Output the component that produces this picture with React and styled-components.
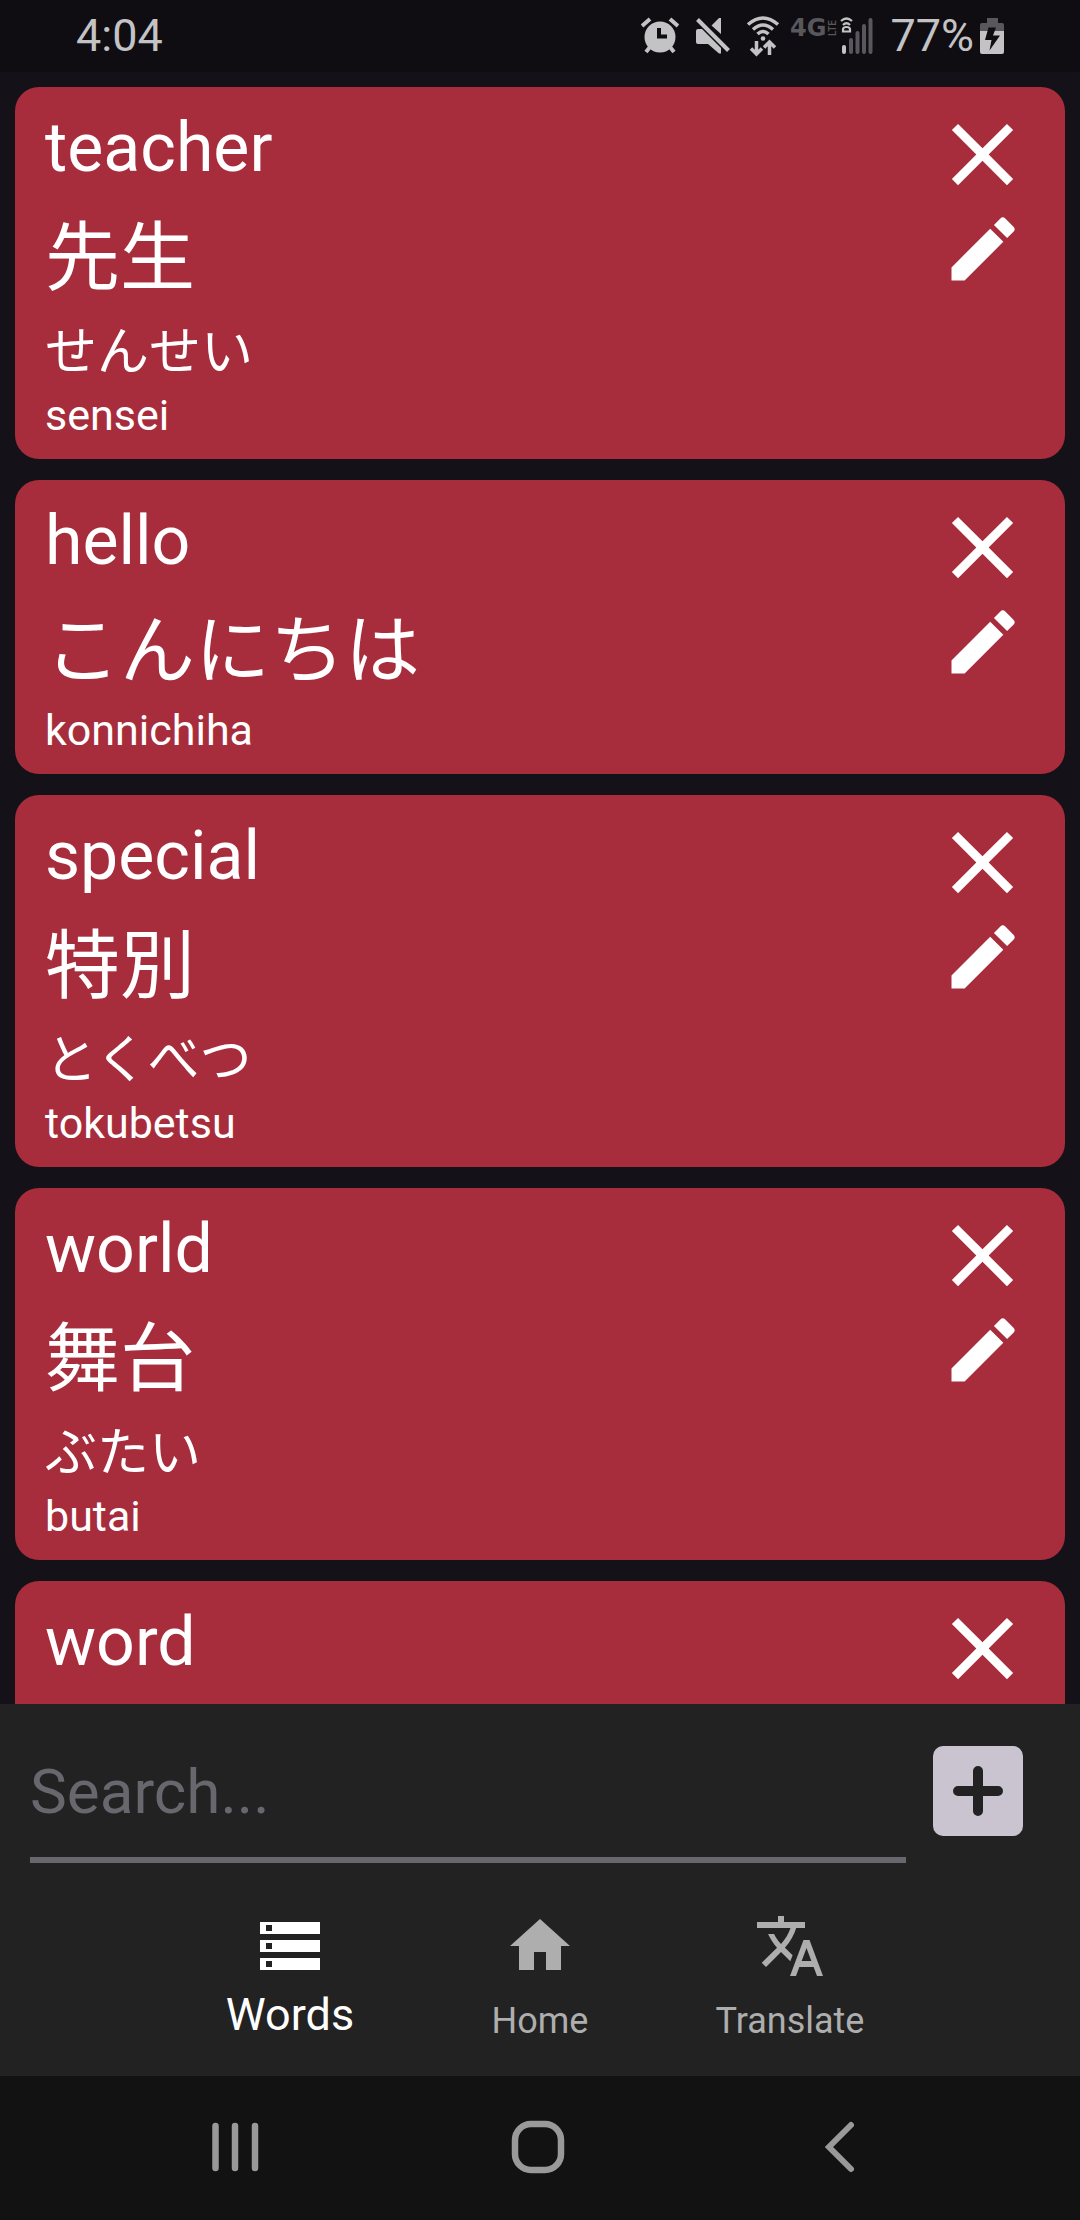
import React, { useState } from "react";
import styled, { createGlobalStyle } from "styled-components";
import { MdClose, MdEdit, MdHome, MdStorage, MdTranslate } from "react-icons/md";

const GlobalStyle = createGlobalStyle`
  * { box-sizing: border-box; }
  body {
    margin: 0;
    background: #141218;
    font-family: Roboto, "Noto Sans CJK JP", sans-serif;
  }
  button, input { font: inherit; }
`;

const Screen = styled.div`
  display: flex;
  flex-direction: column;
  height: 100vh;
  background: #141218;
  color: #fff;
`;

const StatusBar = styled.header`
  display: flex;
  align-items: center;
  justify-content: space-between;
  flex: none;
  height: 72px;
  padding: 0 76px;
  background: #0f0d12;
  color: #c3c3c5;
  font-size: 45px;
  line-height: 72px;
`;

const StatusIcons = styled.div`
  display: flex;
  align-items: center;
  gap: 16px;
  svg { display: block; }
`;

const Network = styled.div`
  display: flex;
  align-items: center;
  gap: 10px;
`;

const Mobile = styled.div`
  display: flex;
  align-items: center;
`;

const Battery = styled.div`
  display: flex;
  align-items: center;
  gap: 6px;
`;

const WordList = styled.main`
  display: flex;
  flex-direction: column;
  gap: 21px;
  flex: 1;
  min-height: 0;
  padding: 15px 15px 0;
  overflow-y: auto;
  scrollbar-width: none;
`;

const Card = styled.article`
  display: flex;
  justify-content: space-between;
  flex: none;
  padding: 15px 30px;
  border-radius: 24px;
  background: #a72d3c;
`;

const Lines = styled.div`
  display: flex;
  flex-direction: column;
`;

const English = styled.h2`
  margin: 0;
  font-size: 68px;
  font-weight: 400;
  line-height: 93px;
`;

const Japanese = styled.p`
  margin: 0;
  font-family: "Noto Sans CJK JP", sans-serif;
  font-size: 75px;
  line-height: 114px;
`;

const Kana = styled.p`
  margin: 0;
  font-family: "Noto Sans CJK JP", sans-serif;
  font-size: 52px;
  line-height: 78px;
`;

const Romaji = styled.p`
  margin: 0;
  font-size: 43px;
  line-height: 57px;
`;

const Actions = styled.div`
  display: flex;
  flex-direction: column;
  align-items: center;
  flex: none;
  height: 189px;
`;

const IconButton = styled.button`
  display: flex;
  padding: 0;
  border: 0;
  background: none;
  color: #fff;
  cursor: pointer;
`;

const Footer = styled.footer`
  flex: none;
  background: #222;
`;

const SearchRow = styled.form`
  display: flex;
  align-items: center;
  gap: 27px;
  padding: 15px 57px 0 30px;
`;

const SearchInput = styled.input`
  flex: 1;
  min-width: 0;
  height: 144px;
  padding: 6px 0 0;
  border: 0;
  border-bottom: 6px solid #68676e;
  border-radius: 0;
  outline: 0;
  background: transparent;
  color: #fff;
  font-size: 62px;
  &::placeholder { color: #68676e; opacity: 1; }
`;

const AddButton = styled.button`
  display: flex;
  align-items: center;
  justify-content: center;
  width: 90px;
  height: 90px;
  padding: 0;
  border: 0;
  border-radius: 10px;
  background: #cac4d0;
  color: #222;
  cursor: pointer;
`;

const Tabs = styled.nav`
  display: flex;
  justify-content: center;
  height: 213px;
  padding-top: 47px;
`;

const Tab = styled.a`
  display: flex;
  flex-direction: column;
  align-items: center;
  width: 250px;
  color: ${(p) => (p.$active ? "#fff" : "#aeaeae")};
  font-size: ${(p) => (p.$active ? 45 : 36)}px;
  line-height: ${(p) => (p.$active ? 66 : 78)}px;
  text-decoration: none;
`;

const SystemBar = styled.div`
  display: flex;
  align-items: center;
  justify-content: space-between;
  flex: none;
  height: 144px;
  padding: 0 210px 2px 205px;
  background: #121212;
`;

const SystemButton = styled(IconButton)`
  color: #999;
`;

const AlarmIcon = () => (
  <svg width="38" height="38" viewBox="1 0 38 38" fill="none">
    <circle cx="20" cy="20" r="15.5" fill="currentColor" />
    <path d="M2 9l8-7M38 9l-8-7M10 30l-4 5M30 30l4 5" stroke="currentColor" strokeWidth="4" />
    <path d="M19 11v8.500h8" stroke="#0f0d12" strokeWidth="4" />
  </svg>
);

const MuteIcon = () => (
  <svg width="35" height="38" viewBox="0 0 35 38">
    <path
      d="M3 12h4l19 19v5.500h-2L13 27H3q-2 0-2-2V14q0-2 2-2zM16.500 8.500l7.500-7.500h2v16z"
      fill="currentColor"
    />
    <path d="M2.500 2.500l31 31" stroke="currentColor" strokeWidth="4" />
  </svg>
);

const WifiIcon = () => (
  <svg width="34" height="42" viewBox="0 0 34 42" fill="none" stroke="currentColor">
    <path d="M2 9.500q15-13 30 0M7 14.500q10-9 20 0M11.500 19q5.500-5 11 0" strokeWidth="3.500" />
    <circle cx="17" cy="23.500" r="2.300" fill="currentColor" stroke="none" />
    <path d="M10.500 26v13M5 33.500l5.500 5.500 5.500-5.500M23.500 40V27M18 32.500l5.500-5.500 5.500 5.500" strokeWidth="3.500" />
  </svg>
);

const LteIcon = () => (
  <svg width="50" height="48" viewBox="0 0 50 48" fill="#58575c" role="img" aria-label="4G LTE">
    <text x="0" y="24" fontFamily="DejaVu Sans" fontWeight="700" fontSize="24">4G</text>
    <text transform="translate(46 24) rotate(-90)" fontFamily="Roboto" fontWeight="500" fontSize="10">LTE</text>
  </svg>
);

const SignalIcon = () => (
  <svg width="34" height="38" viewBox="0 0 34 38" fill="none">
    <path d="M11 35V23M17.500 35V16M24 35V9M30.500 35V3" stroke="#58575c" strokeWidth="4" strokeLinecap="round" />
    <path d="M4 35v-5" stroke="currentColor" strokeWidth="4" strokeLinecap="round" />
    <path d="M1 4q5.500-5 11 0M3 8q3.500-3.500 7 0" stroke="currentColor" strokeWidth="2.200" />
    <path d="M3 14.500v-2q0-2.500 3.500-2.500t3.500 2.500v2z" stroke="currentColor" strokeWidth="2.200" />
  </svg>
);

const BatteryIcon = () => (
  <svg width="24" height="38" viewBox="0 0 24 38">
    <path d="M7 1h11v5h4q2 0 2 2v7H0V8q0-2 2-2h5z" fill="#58575c" />
    <path d="M0 14h24v21q0 2-2 2H2q-2 0-2-2z" fill="currentColor" />
    <path d="M8.500 10.500h7.500l-3 8h7L9.500 33.500l2-10.500H5z" fill="#0f0d12" />
  </svg>
);

const PlusIcon = () => (
  <svg width="50" height="50" viewBox="0 0 50 50" stroke="currentColor" strokeWidth="10" strokeLinecap="round">
    <path d="M25 5v40M5 25h40" />
  </svg>
);

const RecentsIcon = () => (
  <svg width="60" height="60" viewBox="0 0 60 60" stroke="currentColor" strokeWidth="6.500" strokeLinecap="round">
    <path d="M10.500 9v42M30 9v42M50 9v42" />
  </svg>
);

const HomeKeyIcon = () => (
  <svg width="60" height="60" viewBox="0 0 60 60" fill="none" stroke="currentColor" strokeWidth="6.500">
    <rect x="7" y="7" width="46" height="46" rx="16" />
  </svg>
);

const BackIcon = () => (
  <svg width="60" height="60" viewBox="0 0 60 60" fill="none" stroke="currentColor" strokeWidth="6" strokeLinecap="round">
    <path d="M41 8L19 30l22 22" />
  </svg>
);

const words = [
  { english: "teacher", japanese: "先生", kana: "せんせい", romaji: "sensei" },
  { english: "hello", japanese: "こんにちは", romaji: "konnichiha" },
  { english: "special", japanese: "特別", kana: "とくべつ", romaji: "tokubetsu" },
  { english: "world", japanese: "舞台", kana: "ぶたい", romaji: "butai" },
  { english: "word" },
];

const tabs = [
  { label: "Words", Icon: MdStorage, active: true },
  { label: "Home", Icon: MdHome },
  { label: "Translate", Icon: MdTranslate },
];

function WordCard({ english, japanese, kana, romaji }) {
  return (
    <Card>
      <Lines>
        <English>{english}</English>
        {japanese && <Japanese lang="ja">{japanese}</Japanese>}
        {kana && <Kana lang="ja">{kana}</Kana>}
        {romaji && <Romaji>{romaji}</Romaji>}
      </Lines>
      <Actions>
        <IconButton type="button" aria-label={`Delete ${english}`}>
          <MdClose size={105} />
        </IconButton>
        <IconButton type="button" aria-label={`Edit ${english}`}>
          <MdEdit size={84} />
        </IconButton>
      </Actions>
    </Card>
  );
}

export default function App() {
  const [query, setQuery] = useState("");
  return (
    <Screen>
      <GlobalStyle />
      <StatusBar>
        <time>4:04</time>
        <StatusIcons>
          <AlarmIcon />
          <MuteIcon />
          <Network>
            <WifiIcon />
            <Mobile>
              <LteIcon />
              <SignalIcon />
            </Mobile>
          </Network>
          <Battery>
            <span>77%</span>
            <BatteryIcon />
          </Battery>
        </StatusIcons>
      </StatusBar>
      <WordList>
        {words.map((word) => (
          <WordCard key={word.english} {...word} />
        ))}
      </WordList>
      <Footer>
        <SearchRow onSubmit={(e) => e.preventDefault()}>
          <SearchInput
            type="text"
            aria-label="Search words"
            placeholder="Search..."
            value={query}
            onChange={(e) => setQuery(e.target.value)}
          />
          <AddButton type="button" aria-label="Add word">
            <PlusIcon />
          </AddButton>
        </SearchRow>
        <Tabs>
          {tabs.map(({ label, Icon, active }) => (
            <Tab key={label} href={`#${label.toLowerCase()}`} $active={active}>
              <Icon size={72} />
              {label}
            </Tab>
          ))}
        </Tabs>
      </Footer>
      <SystemBar>
        <SystemButton type="button" aria-label="Recent apps"><RecentsIcon /></SystemButton>
        <SystemButton type="button" aria-label="Home screen"><HomeKeyIcon /></SystemButton>
        <SystemButton type="button" aria-label="Back"><BackIcon /></SystemButton>
      </SystemBar>
    </Screen>
  );
}
